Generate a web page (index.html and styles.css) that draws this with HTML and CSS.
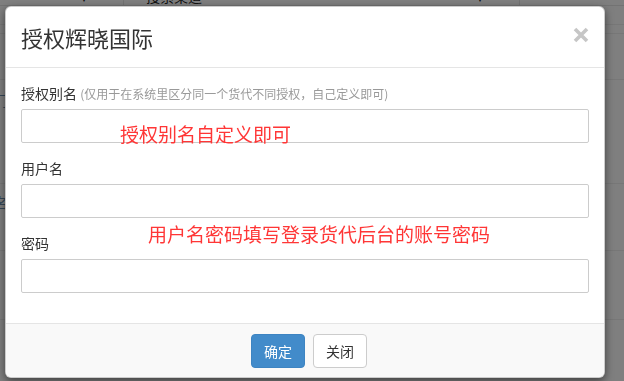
FILE: index.html
```html
<!DOCTYPE html>
<html lang="zh-CN">
<head>
<meta charset="utf-8">
<title>授权辉晓国际</title>
<link rel="stylesheet" href="styles.css">
</head>
<body>
<div class="page">
  <div class="toolbar">
    <div class="cell cell-a"><span class="caret">▾</span></div>
    <div class="cell cell-b"><span class="sel-text">搜索渠道</span><span class="caret">▾</span></div>
  </div>
  <div class="row r1"></div>
  <div class="row r2"></div>
  <div class="row r3"></div>
  <div class="row r4"><span class="edge-text">门</span></div>
  <div class="row r5"><span class="edge-text">名</span></div>
  <div class="row r6"></div>
  <div class="row r7"><span class="page-btn"></span></div>
</div>
<div class="backdrop"></div>
<div class="modal">
  <div class="modal-header">
    <h4 class="modal-title">授权辉晓国际</h4>
    <span class="close" aria-label="关闭">
      <svg width="16" height="16" viewBox="0 0 16 16"><path d="M2 2 L14 14 M14 2 L2 14" stroke="#c6c6c6" stroke-width="3.6" fill="none"/></svg>
    </span>
  </div>
  <div class="modal-body">
    <div class="form-group">
      <label class="label">授权别名 <span class="hint">(仅用于在系统里区分同一个货代不同授权，自己定义即可)</span></label>
      <div class="input"></div>
    </div>
    <div class="form-group">
      <label class="label">用户名</label>
      <div class="input"></div>
    </div>
    <div class="form-group">
      <label class="label">密码</label>
      <div class="input"></div>
    </div>
    <span class="note note-1">授权别名自定义即可</span>
    <span class="note note-2">用户名密码填写登录货代后台的账号密码</span>
  </div>
  <div class="modal-footer">
    <button class="btn btn-primary">确定</button>
    <button class="btn btn-default">关闭</button>
  </div>
</div>
</body>
</html>
```
FILE: styles.css
```css
* { box-sizing: border-box; }
html, body {
  margin: 0;
  padding: 0;
  width: 624px;
  height: 381px;
  overflow: hidden;
  background: #fff;
  font-family: "Noto Sans CJK SC", "Noto Sans", sans-serif;
  color: #333;
}
.page { width: 624px; height: 381px; overflow: hidden; }
.toolbar {
  display: flex;
  height: 30px;
  margin-top: -24px;
  border-bottom: 1px solid #e6e6e6;
  font-size: 14px;
  line-height: 20px;
}
.cell {
  display: flex;
  align-items: flex-end;
  border-right: 1px solid #e6e6e6;
}
.cell-a { width: 124px; justify-content: flex-end; padding-right: 36px; }
.cell-b { width: 396px; padding-left: 22px; padding-right: 36px; justify-content: space-between; }
.caret { color: #222; font-size: 12px; line-height: 16px; }
.sel-text { color: #222; line-height: 18px; }
.row { border-bottom: 1px solid #eeeeee; }
.r1 { height: 19px; }
.r2 { height: 9px; }
.r3 { height: 46px; }
.r4 { height: 104px; }
.r5 { height: 67px; }
.r6 { height: 69px; }
.r7 { height: 56px; border-bottom: 0; overflow: hidden; }
.edge-text {
  display: block;
  margin-left: -6px;
  font-size: 14px;
  line-height: 20px;
  color: #6a8fb0;
}
.r4 .edge-text { padding-top: 10px; }
.r5 .edge-text { padding-top: 8px; }
.page-btn {
  display: block;
  margin-left: 253px;
  margin-top: 50px;
  width: 76px;
  height: 6px;
  background: #b6b6b6;
}
.backdrop {
  position: fixed;
  inset: 0;
  background: rgba(0, 0, 0, 0.5);
}
.modal {
  position: absolute;
  top: 6px;
  left: 5px;
  width: 600px;
  background: #fff;
  border: 1px solid rgba(0, 0, 0, 0.2);
  border-radius: 6px;
  box-shadow: 0 3px 9px rgba(0, 0, 0, 0.5);
  overflow: hidden;
}
.modal-header {
  display: flex;
  justify-content: space-between;
  align-items: flex-start;
  padding: 15px;
  border-bottom: 1px solid #e5e5e5;
}
.modal-title {
  margin: 0;
  font-size: 22px;
  line-height: 30px;
  height: 30px;
  font-weight: normal;
  color: #333;
}
.close { display: block; width: 16px; height: 16px; margin-top: 5px; }
.close svg { display: block; }
.modal-body {
  position: relative;
  padding: 15px;
}
.form-group { margin-bottom: 15px; }
.label {
  display: block;
  font-size: 14px;
  line-height: 20px;
  height: 20px;
  margin-bottom: 6px;
  color: #333;
  white-space: nowrap;
}
.hint { font-size: 12px; line-height: 20px; color: #999; }
.input {
  height: 34px;
  border: 1px solid #ccc;
  border-radius: 2px;
  background: #fff;
}
.note {
  position: absolute;
  font-size: 19px;
  line-height: 24px;
  color: #ff3636;
  white-space: nowrap;
}
.note-1 { left: 114px; top: 54px; }
.note-2 { left: 142px; top: 154px; }
.modal-footer {
  display: flex;
  justify-content: center;
  gap: 8px;
  padding: 10px 15px 9px 23px;
  background: #f9f9f9;
  border-top: 1px solid #e5e5e5;
}
.btn {
  font-family: "Noto Sans CJK SC", "Noto Sans", sans-serif;
  font-size: 14px;
  line-height: 20px;
  height: 34px;
  padding: 6px 12px;
  border-radius: 4px;
  border: 1px solid transparent;
  cursor: pointer;
}
.btn-primary { background: #428bca; border-color: #3d84c2; color: #fff; }
.btn-default { background: #fff; border-color: #ccc; color: #333; }
```
